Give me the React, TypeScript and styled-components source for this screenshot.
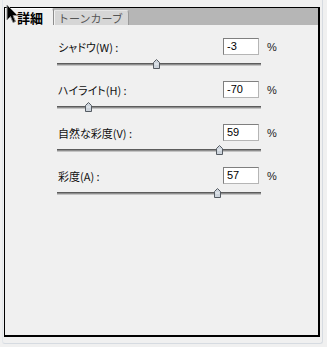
import * as React from "react";
import styled, { createGlobalStyle } from "styled-components";

const GlobalStyle = createGlobalStyle`
  html, body {
    margin: 0;
    padding: 0;
    background: #f0f0f0;
  }
  body {
    font-family: "Noto Sans CJK JP", "Liberation Sans", sans-serif;
    color: #000;
  }
`;

const sliders = [
  { label: "シャドウ(W) :", value: -3, min: -100, max: 100 },
  { label: "ハイライト(H) :", value: -70, min: -100, max: 100 },
  { label: "自然な彩度(V) :", value: 59, min: -100, max: 100 },
  { label: "彩度(A) :", value: 57, min: -100, max: 100 },
];

const TRACK_WIDTH = 204;

const Cursor = () => (
  <CursorWrap>
    <svg width="13" height="20" viewBox="0 0 13 20">
      <path
        d="M1 1 L1 16 L4.5 12.5 L7 18.5 L9.5 17.5 L7 11.5 L11.5 11.5 Z"
        fill="#000"
        stroke="#8a8a8a"
        strokeWidth="1"
        strokeLinejoin="round"
      />
    </svg>
  </CursorWrap>
);

const Thumb = () => (
  <svg width="9" height="10" viewBox="0 0 9 10">
    <path
      d="M4.5 0.5 L7.5 3.5 L7.5 9.5 L1.5 9.5 L1.5 3.5 Z"
      fill="#cdd4dc"
      stroke="#555b62"
      strokeWidth="1"
    />
    <path d="M2.5 5 L6.5 5" stroke="#eef1f4" strokeWidth="1" />
  </svg>
);

const App = () => {
  return (
    <>
      <GlobalStyle />
      <Frame>
        <Panel>
          <TabBar>
            <Tab active>詳細</Tab>
            <Tab>トーンカーブ</Tab>
          </TabBar>
          <Content>
            {sliders.map((s) => {
              const pos = ((s.value - s.min) / (s.max - s.min)) * TRACK_WIDTH;
              return (
                <Row key={s.label}>
                  <Header>
                    <Label>{s.label}</Label>
                    <ValueBox>{s.value}</ValueBox>
                    <Percent>%</Percent>
                  </Header>
                  <SliderArea>
                    <Track />
                    <ThumbWrap style={{ left: pos - 4 }}>
                      <Thumb />
                    </ThumbWrap>
                  </SliderArea>
                </Row>
              );
            })}
          </Content>
        </Panel>
        <Cursor />
      </Frame>
    </>
  );
};

export default App;

const Frame = styled.div`
  position: relative;
  width: 318px;
  height: 336px;
  margin-left: 2px;
  padding: 7px 0 0 1px;
  border-right: 1px solid #d6dbe1;
  border-bottom: 1px solid #d6dbe1;
  border-left: 1px solid #e2e6ea;
  border-radius: 0 0 3px 3px;
`;

const Panel = styled.div`
  width: 313px;
  height: 327px;
  border-top: 1px solid #000;
  border-left: 1px solid #000;
  border-right: 2px solid #000;
  border-bottom: 2px solid #000;
  background: #f0f0f0;
  display: flex;
  flex-direction: column;
`;

const TabBar = styled.div`
  display: flex;
  align-items: flex-end;
  height: 17px;
  background: #b6b6b6;
`;

const Tab = styled.div<{ active?: boolean }>`
  box-sizing: border-box;
  display: flex;
  align-items: center;
  height: ${(p) => (p.active ? "17px" : "15px")};
  padding: ${(p) => (p.active ? "0 5px 0 12px" : "0 5px 0 3px")};
  background: ${(p) => (p.active ? "#f0f0f0" : "#d6d6d6")};
  border-top: 1px solid ${(p) => (p.active ? "#ffffff" : "#e6e6e6")};
  border-right: 1px solid ${(p) => (p.active ? "#8c8c8c" : "#9a9a9a")};
  border-left: ${(p) => (p.active ? "0" : "1px solid #f2f2f2")};
  border-top-right-radius: 3px;
  font-size: ${(p) => (p.active ? "13px" : "11px")};
  font-weight: ${(p) => (p.active ? 700 : 400)};
  color: ${(p) => (p.active ? "#000" : "#555")};
  line-height: 1;
  white-space: nowrap;
  width: ${(p) => (p.active ? "49px" : "75px")};
`;

const Content = styled.div`
  padding: 13px 0 0 52px;
  display: flex;
  flex-direction: column;
`;

const Row = styled.div`
  display: flex;
  flex-direction: column;
  height: 43px;
`;

const Header = styled.div`
  display: grid;
  grid-template-columns: 166px 36px auto;
  align-items: center;
  height: 17px;
`;

const Label = styled.span`
  font-size: 11px;
  font-feature-settings: "palt";
  padding-left: 1px;
  color: #111;
  white-space: nowrap;
`;

const ValueBox = styled.div`
  box-sizing: border-box;
  height: 17px;
  width: 36px;
  background: #fff;
  border: 1px solid #7f7f7f;
  border-right-color: #b5b5b5;
  border-bottom-color: #b5b5b5;
  font-family: "Liberation Sans", Arial, sans-serif;
  font-size: 11px;
  line-height: 15px;
  padding-left: 3px;
  color: #000;
`;

const Percent = styled.span`
  margin-left: 8px;
  font-family: "Liberation Sans", Arial, sans-serif;
  font-size: 11px;
  color: #222;
`;

const SliderArea = styled.div`
  position: relative;
  width: ${TRACK_WIDTH}px;
  height: 17px;
  margin-top: 1px;
  display: flex;
  align-items: center;
`;

const Track = styled.div`
  width: 100%;
  height: 3px;
  background: linear-gradient(#5c5c5c 0 1px, #8e8e8e 1px 2px, #c4c4c4 2px 3px);
`;

const ThumbWrap = styled.div`
  position: absolute;
  top: 3px;
  width: 9px;
  height: 10px;
  line-height: 0;
`;

const CursorWrap = styled.div`
  position: absolute;
  left: 3px;
  top: 4px;
  line-height: 0;
`;
